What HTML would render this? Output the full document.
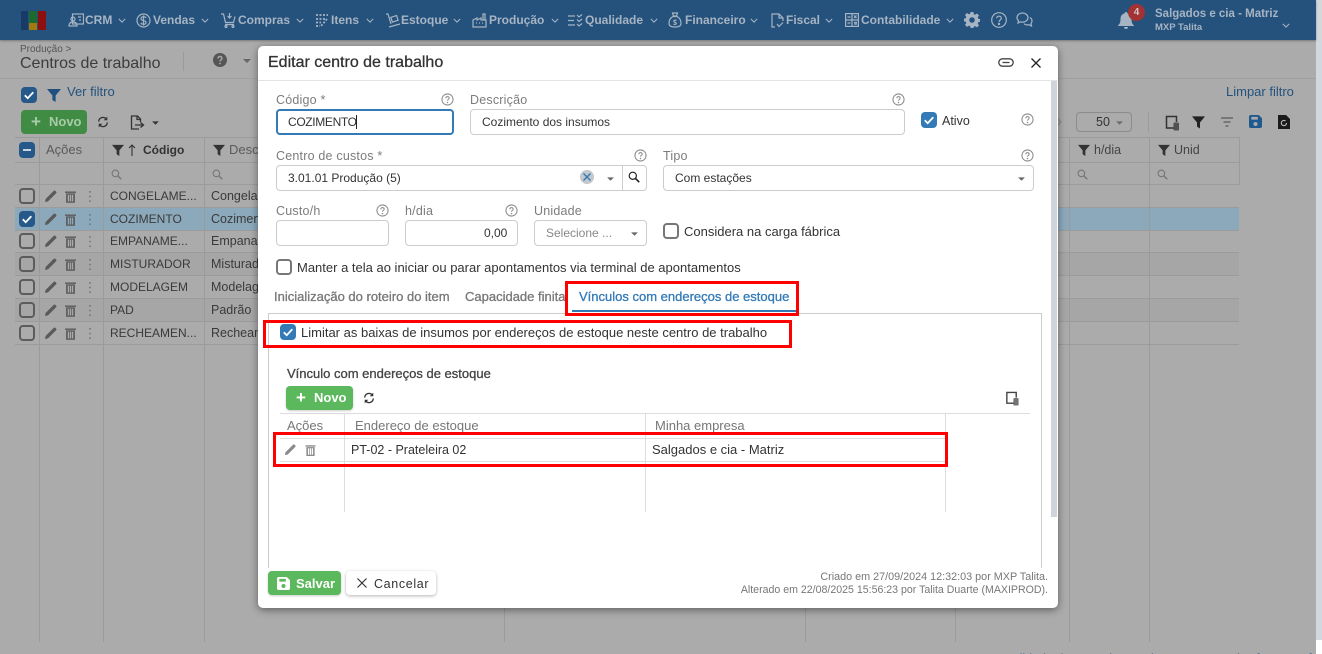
<!DOCTYPE html>
<html lang="pt-BR">
<head>
<meta charset="utf-8">
<title>Editar centro de trabalho</title>
<style>
html,body{margin:0;padding:0;overflow:hidden;height:654px;width:1322px}
body{position:relative;background:#ababab;font-family:"Liberation Sans",sans-serif;font-size:12.5px;color:#333}
.a,.t,svg.i{position:absolute}
.t{white-space:nowrap;line-height:14px;transform:translateY(-7px)}
#nav{left:0;top:0;width:1316px;height:40px;background:#24527c;box-shadow:0 1px 2px rgba(0,0,0,.3)}
.n{color:#a7b4c3;font-weight:bold;font-size:12px;top:20px}
.navicon{color:#a7b4c3;fill:none;stroke:currentColor;stroke-width:1.2}
.l{background:#9b9b9b}
.lab{color:#7c7c7c;font-size:12.5px;letter-spacing:.2px}
.inp{box-sizing:border-box;border:1px solid #ccc;border-radius:4px;background:#fff}
.cb{box-sizing:border-box;width:16px;height:16px;border:2px solid #666;border-radius:4px;background:transparent}
.cb.w{background:#fff;border-color:#777}
.cb.on{background:#337ab7;border:0}
.cb.d{border-color:#5c5c5c}
.cb.don{background:#26598a;border:0}
.ml{background:#ddd}
.redb{box-sizing:border-box;border:3px solid #f00}
.bt{color:#3a3a3a;font-size:12.5px}
.bc{color:#3a3a3a;font-size:12px}
.sb{-webkit-text-stroke:.3px currentColor}
</style>
</head>
<body>
<svg width="0" height="0" style="position:absolute">
<defs>
<symbol id="q" viewBox="0 0 14 14"><circle cx="7" cy="7" r="6" fill="none" stroke="#8a8a8a" stroke-width="1.1"/><path d="M5.2 5.6c0-1 .8-1.7 1.8-1.7s1.8.7 1.8 1.6c0 1.4-1.8 1.4-1.8 2.8" fill="none" stroke="#8a8a8a" stroke-width="1.1"/><circle cx="7" cy="10.3" r=".8" fill="#8a8a8a"/></symbol>
<symbol id="ck" viewBox="0 0 16 16"><path d="M3.8 8.3l2.9 2.9 5.6-6" fill="none" stroke="#fff" stroke-width="1.8"/></symbol>
<symbol id="pen" viewBox="0 0 14 14"><path d="M1 13l.6-3L9.7 1.9c.5-.5 1.2-.5 1.7 0l.7.7c.5.5.5 1.2 0 1.7L4 12.4z" fill="currentColor"/></symbol>
<symbol id="tr" viewBox="0 0 12 14"><path d="M0 1.5h12V3H0zM1.2 3.6h9.6V14H1.2zM3 5v7.500h1.500V5zM5.300 5v7.500h1.400V5zM7.500 5v7.500H9V5z" fill="currentColor" fill-rule="evenodd"/></symbol>
<symbol id="dots" viewBox="0 0 4 14"><circle cx="2" cy="2" r="1" fill="currentColor"/><circle cx="2" cy="7" r="1" fill="currentColor"/><circle cx="2" cy="12" r="1" fill="currentColor"/></symbol>
<symbol id="fl" viewBox="0 0 14 14"><path d="M0 1h14L8.600 7.500V14l-3.200-2V7.500z" fill="currentColor"/></symbol>
<symbol id="mg" viewBox="0 0 12 12"><circle cx="4.800" cy="4.800" r="3.600" fill="none" stroke="currentColor" stroke-width="1.200"/><path d="M7.500 7.500l3.700 3.700" stroke="currentColor" stroke-width="1.600"/></symbol>
<symbol id="rf" viewBox="0 0 14 14"><path d="M2 6.500A5 5 0 0 1 10.800 3.400M12 7.500A5 5 0 0 1 3.200 10.600" fill="none" stroke="currentColor" stroke-width="1.500"/><path d="M12 .8v4.200H7.800zM2 13.200V9h4.200z" fill="currentColor"/></symbol>
<symbol id="col" viewBox="0 0 14 16"><path d="M9 13H1.500V1.500h10V7" fill="none" stroke="currentColor" stroke-width="1.500"/><rect x="8.500" y="7.500" width="5.500" height="8" rx="1" fill="currentColor" opacity=".75"/></symbol>
<symbol id="car" viewBox="0 0 8 4"><path d="M0 0h8L4 4z" fill="currentColor"/></symbol>
<symbol id="chev" viewBox="0 0 10 6"><path d="M1 1l4 4 4-4" fill="none" stroke="currentColor" stroke-width="1.300"/></symbol>
<symbol id="sv" viewBox="0 0 14 14"><path d="M0 2a2 2 0 0 1 2-2h8.500L14 3.500V12a2 2 0 0 1-2 2H2a2 2 0 0 1-2-2zM2.500 2v3h7V2zM7 7.500a2.200 2.200 0 1 0 0 4.400 2.200 2.200 0 0 0 0-4.400z" fill="currentColor" fill-rule="evenodd"/></symbol>
</defs>
</svg>

<!-- PAGE BACKGROUND -->
<div class="a" style="left:1316px;top:0;width:6px;height:640px;background:#d2d8dc"></div>
<div class="a" style="left:1316px;top:640px;width:6px;height:14px;background:#fff"></div>

<!-- NAV -->
<div class="a" id="nav"></div>
<div class="a" style="left:21px;top:11px;width:7px;height:19px;background:#173a66"></div>
<div class="a" style="left:29px;top:11px;width:8px;height:12px;background:#1c6b2e"></div>
<div class="a" style="left:29px;top:23px;width:8px;height:7px;background:#a2780f"></div>
<div class="a" style="left:38px;top:11px;width:8px;height:19px;background:#8e0f10"></div>

<svg class="i navicon" style="left:68px;top:13px" width="16" height="14" viewBox="0 0 16 14"><rect x="4.500" y="1" width="11" height="10"/><circle cx="5" cy="6" r="2"/><path d="M1 13c0-3 2-4 4-4s4 1 4 4zM10 4h3M11 7h2"/></svg>
<div class="t n" style="left:85px">CRM</div>
<svg class="i" style="left:118px;top:18px;color:#a7b4c3" width="8" height="5"><use href="#chev"/></svg>
<svg class="i navicon" style="left:136px;top:13px" width="15" height="15" viewBox="0 0 15 15"><circle cx="7.500" cy="7.500" r="6.500"/><path d="M10 5c-.5-1-1.500-1.300-2.500-1.300S5 4.300 5 5.600c0 2.700 5 1.200 5 4 0 1.200-1.200 1.700-2.500 1.700S5.300 10.800 5 9.800M7.500 2.500v10"/></svg>
<div class="t n" style="left:153px">Vendas</div>
<svg class="i" style="left:201px;top:18px;color:#a7b4c3" width="8" height="5"><use href="#chev"/></svg>
<svg class="i navicon" style="left:221px;top:12px" width="15" height="16" viewBox="0 0 15 16"><path d="M0 2h2.500l2 8.500h8l1.500-6M4 12.500h9M8.500 1v5M6.500 4l2 2 2-2"/><circle cx="5" cy="14.500" r="1"/><circle cx="12" cy="14.500" r="1"/></svg>
<div class="t n" style="left:238px">Compras</div>
<svg class="i" style="left:296px;top:18px;color:#a7b4c3" width="8" height="5"><use href="#chev"/></svg>
<svg class="i navicon" style="left:315px;top:13px;stroke-dasharray:2 1.500;stroke-width:1.700" width="14" height="14" viewBox="0 0 14 14"><path d="M1 2h12M1 6h10M1 9.500h5M1 13h4M12 6l-6 7"/></svg>
<div class="t n" style="left:331px">Itens</div>
<svg class="i" style="left:366px;top:18px;color:#a7b4c3" width="8" height="5"><use href="#chev"/></svg>
<svg class="i navicon" style="left:385px;top:13px" width="15" height="15" viewBox="0 0 15 15"><path d="M1 1h2l3 10M4 14l11-3"/><rect x="6.500" y="3.500" width="6" height="5" transform="rotate(-18 9 6)"/></svg>
<div class="t n" style="left:401px">Estoque</div>
<svg class="i" style="left:453px;top:18px;color:#a7b4c3" width="8" height="5"><use href="#chev"/></svg>
<svg class="i navicon" style="left:472px;top:13px" width="15" height="15" viewBox="0 0 15 15"><path d="M1 14V7l4-2v2l4-2v2h5v7zM11 7V1h2v6M4 10h1M7 10h1M10 10h1"/></svg>
<div class="t n" style="left:489px">Produção</div>
<svg class="i" style="left:551px;top:18px;color:#a7b4c3" width="8" height="5"><use href="#chev"/></svg>
<svg class="i navicon" style="left:568px;top:14px" width="15" height="13" viewBox="0 0 15 13"><path d="M0 2h7M0 6.500h6M0 11h7M9 1l2 2 3-2.500M9 5.500l2 2 3-2.500M9 10l2 2 3-2.500"/></svg>
<div class="t n" style="left:585px">Qualidade</div>
<svg class="i" style="left:650px;top:18px;color:#a7b4c3" width="8" height="5"><use href="#chev"/></svg>
<svg class="i navicon" style="left:668px;top:12px" width="14" height="16" viewBox="0 0 14 16"><path d="M4.500 1h5L8.500 4h-3zM5 4.500C2 6 1 9 1 11.500 1 14 3 15 7 15s6-1 6-3.500C13 9 12 6 9 4.500zM8.500 8.500C8 8 6 7.800 5.800 9.200c0 1.300 2.500.9 2.500 2.200 0 1.200-2 1.200-2.700.6"/></svg>
<div class="t n" style="left:685px">Financeiro</div>
<svg class="i" style="left:750px;top:18px;color:#a7b4c3" width="8" height="5"><use href="#chev"/></svg>
<svg class="i navicon" style="left:771px;top:13px" width="13" height="15" viewBox="0 0 13 15"><path d="M4 14H1V1h7l4 4v3M8 1v4h4M6 11l2 2.500 4-4"/></svg>
<div class="t n" style="left:786px">Fiscal</div>
<svg class="i" style="left:825px;top:18px;color:#a7b4c3" width="8" height="5"><use href="#chev"/></svg>
<svg class="i navicon" style="left:845px;top:13px" width="14" height="14" viewBox="0 0 14 14"><rect x=".6" y=".6" width="12.800" height="12.800"/><path d="M.6 7h12.800M7 .6v12.800M2.500 4h3M9 2.500l2.500 2.500M11.500 2.500L9 5M2.500 10h3M9 9.500h3M9 11h3"/></svg>
<div class="t n" style="left:861px">Contabilidade</div>
<svg class="i" style="left:946px;top:18px;color:#a7b4c3" width="8" height="5"><use href="#chev"/></svg>
<svg class="i" style="left:964px;top:12px" width="16" height="16" viewBox="0 0 16 16"><path fill="#a7b4c3" fill-rule="evenodd" d="M6.600 0h2.800l.4 2.200 1.300.6L13 1.500l2 2-1.300 1.900.5 1.300L16 7v2.800l-1.800.4-.5 1.300 1.300 1.900-2 2-1.900-1.300-1.300.6L9.400 16H6.600l-.4-1.800-1.300-.6L3 14.900l-2-2 1.300-1.900-.5-1.300L0 9.400V6.600l1.800-.4.5-1.300L1 3l2-2 1.900 1.300 1.300-.6zM8 5.200a2.800 2.800 0 1 0 0 5.600 2.800 2.800 0 0 0 0-5.600z"/></svg>
<svg class="i navicon" style="left:991px;top:12px" width="16" height="16" viewBox="0 0 16 16"><circle cx="8" cy="8" r="7.300"/><path d="M5.700 6.300C5.700 5 6.700 4.200 8 4.200S10.300 5 10.300 6.200C10.300 8 8 8 8 10"/><circle cx="8" cy="12" r=".6"/></svg>
<svg class="i navicon" style="left:1016px;top:12px" width="17" height="16" viewBox="0 0 17 16"><path d="M6.500 1C3.500 1 1 3 1 5.500c0 1.300.6 2.400 1.500 3.200L2 11l2.500-1.200c.6.200 1.300.3 2 .3 3 0 5.500-2 5.500-4.500S9.500 1 6.500 1zM14 5.500c1.200.8 2 2 2 3.500 0 1-.4 1.900-1 2.600l.5 2.400-2.500-1.300c-1.800.5-3.800.1-5-1"/></svg>

<svg class="i" style="left:1118px;top:12px" width="16" height="18" viewBox="0 0 16 18"><path fill="#a7b4c3" d="M8 0c.9 0 1.400.6 1.400 1.400C12 2 13.500 4 13.500 7c0 4 1 5 2.500 6.500V14H0v-.5C1.500 12 2.500 11 2.500 7c0-3 1.500-5 4.100-5.600C6.600.6 7.100 0 8 0zM6 15h4a2 2 0 0 1-4 0z"/></svg>
<div class="a" style="left:1128px;top:4px;width:17px;height:17px;border-radius:50%;background:#a23234"></div>
<div class="t" style="left:1128px;top:13px;width:17px;text-align:center;color:#d3c6c8;font-size:10px;font-weight:bold">4</div>
<div class="t n" style="left:1155px;top:14px;font-size:11.5px">Salgados e cia - Matriz</div>
<div class="t n" style="left:1155px;top:28px;font-size:9.5px">MXP Talita</div>
<svg class="i" style="left:1282px;top:23px;color:#a7b4c3" width="8" height="5"><use href="#chev"/></svg>

<!-- PAGE HEADER -->
<div class="t" style="left:20px;top:50px;font-size:10px;color:#565656">Produção &gt;</div>
<div class="t" style="left:20px;top:64px;font-size:16px;color:#3d3d3d">Centros de trabalho</div>
<div class="a l" style="left:183px;top:52px;width:1px;height:19px"></div>
<svg class="i" style="left:213px;top:53px" width="14" height="14" viewBox="0 0 14 14"><circle cx="7" cy="7" r="7" fill="#565656"/><path d="M5 5.500C5 4.300 5.900 3.500 7 3.500s2 .8 2 1.900c0 1.600-2 1.500-2 3" fill="none" stroke="#ababab" stroke-width="1.400"/><circle cx="7" cy="10.500" r=".9" fill="#ababab"/></svg>
<svg class="i" style="left:243px;top:59px;color:#666" width="8" height="4"><use href="#car"/></svg>
<div class="a l" style="left:0;top:78px;width:258px;height:1px;opacity:.7"></div>
<div class="a l" style="left:1058px;top:78px;width:258px;height:1px;opacity:.7"></div>

<div class="a cb don" style="left:21px;top:87px"><svg width="16" height="16"><use href="#ck"/></svg></div>
<svg class="i" style="left:47px;top:88px;color:#1f5080" width="14" height="14"><use href="#fl"/></svg>
<div class="t" style="left:67px;top:92px;color:#25527d;font-size:13px">Ver filtro</div>
<div class="t" style="left:1226px;top:92px;color:#25527d;font-size:13px">Limpar filtro</div>

<div class="a" style="left:21px;top:110px;width:66px;height:24px;background:#418c44;border-radius:4px"></div>
<div class="t" style="left:31px;top:122px;color:#a9cba9;font-size:17px;font-weight:bold">+</div>
<div class="t" style="left:49px;top:122px;color:#a9cba9;font-size:13px;font-weight:bold">Novo</div>
<svg class="i" style="left:97px;top:116px;color:#333" width="12" height="12" viewBox="0 0 14 14"><use href="#rf"/></svg>
<svg class="i" style="left:130px;top:115px" width="15" height="15" viewBox="0 0 15 15"><path d="M9 14H1.500V1h6l3 3v3M7 1v3.500h3.500M5 10h8M10.500 7.500L13.500 10l-3 2.500" fill="none" stroke="#333" stroke-width="1.300"/></svg>
<svg class="i" style="left:152px;top:121px;color:#333" width="7" height="4" viewBox="0 0 8 4"><use href="#car"/></svg>

<svg class="i" style="left:1056px;top:117px;color:#8f8f8f" width="6" height="10" viewBox="0 0 6 10"><path d="M1 1l4 4-4 4" fill="none" stroke="currentColor" stroke-width="1.500"/></svg>
<div class="a" style="left:1076px;top:112px;width:56px;height:20px;box-sizing:border-box;border:1px solid #8c8c8c;border-radius:4px"></div>
<div class="t" style="left:1096px;top:122px;color:#333">50</div>
<svg class="i" style="left:1116px;top:121px;color:#6a6a6a" width="7" height="4" viewBox="0 0 8 4"><use href="#car"/></svg>
<div class="a l" style="left:1148px;top:112px;width:1px;height:20px"></div>
<svg class="i" style="left:1165px;top:115px;color:#333" width="14" height="16"><use href="#col"/></svg>
<svg class="i" style="left:1192px;top:115px;color:#222" width="13" height="14" viewBox="0 0 14 14"><use href="#fl"/></svg>
<svg class="i" style="left:1221px;top:117px" width="12" height="10" viewBox="0 0 12 10"><path d="M0 1h12M2.500 5h7M4.500 9h3" stroke="#5a5a5a" stroke-width="1.200"/></svg>
<svg class="i" style="left:1249px;top:115px;color:#1f5a8e" width="13" height="13" viewBox="0 0 14 14"><use href="#sv"/></svg>
<svg class="i" style="left:1278px;top:115px" width="12" height="14" viewBox="0 0 12 14"><path d="M0 0h8l4 4v10H0z" fill="#1b1b1b"/><path d="M8.500 8a2.600 2.600 0 1 1-1-2" fill="none" stroke="#bbb" stroke-width="1.100"/></svg>

<!-- BACKGROUND TABLE -->
<div class="a l" style="left:15px;top:137px;width:1224px;height:1px"></div>
<div class="a l" style="left:15px;top:162px;width:1224px;height:1px"></div>
<div class="a l" style="left:15px;top:184px;width:1224px;height:1px"></div>
<div class="a" style="left:15px;top:207px;width:1224px;height:23px;background:#8ca9bc"></div>
<div class="a" style="left:15px;top:253px;width:1224px;height:22px;background:#a6a6a6"></div>
<div class="a" style="left:15px;top:298px;width:1224px;height:23px;background:#a6a6a6"></div>
<div class="a l" style="left:15px;top:207px;width:1224px;height:1px"></div>
<div class="a l" style="left:15px;top:230px;width:1224px;height:1px"></div>
<div class="a l" style="left:15px;top:252px;width:1224px;height:1px"></div>
<div class="a l" style="left:15px;top:275px;width:1224px;height:1px"></div>
<div class="a l" style="left:15px;top:298px;width:1224px;height:1px"></div>
<div class="a l" style="left:15px;top:321px;width:1224px;height:1px"></div>
<div class="a l" style="left:15px;top:344px;width:1224px;height:1px"></div>
<div class="a l" style="left:39px;top:137px;width:1px;height:505px"></div>
<div class="a l" style="left:103px;top:137px;width:1px;height:505px"></div>
<div class="a l" style="left:204px;top:137px;width:1px;height:505px"></div>
<div class="a l" style="left:504px;top:137px;width:1px;height:505px"></div>
<div class="a l" style="left:805px;top:137px;width:1px;height:505px"></div>
<div class="a l" style="left:955px;top:137px;width:1px;height:505px"></div>
<div class="a l" style="left:1069px;top:137px;width:1px;height:505px"></div>
<div class="a l" style="left:1149px;top:137px;width:1px;height:505px"></div>
<div class="a l" style="left:1239px;top:137px;width:1px;height:48px"></div>

<div class="a" style="left:19px;top:142px;width:16px;height:16px;background:#26598a;border-radius:4px"></div>
<div class="a" style="left:23px;top:149px;width:8px;height:2px;background:#c8d4de"></div>
<div class="t bt" style="left:46px;top:150px;color:#5a5a5a;font-size:13px">Ações</div>
<svg class="i" style="left:112px;top:144px;color:#333" width="12" height="12" viewBox="0 0 14 14"><use href="#fl"/></svg>
<svg class="i" style="left:128px;top:144px" width="8" height="12" viewBox="0 0 8 12"><path d="M4 12V1M1 4l3-3 3 3" fill="none" stroke="#333" stroke-width="1.100"/></svg>
<div class="t bt" style="left:143px;top:150px;font-weight:bold;color:#333;font-size:12px">Código</div>
<svg class="i" style="left:213px;top:144px;color:#333" width="12" height="12" viewBox="0 0 14 14"><use href="#fl"/></svg>
<div class="t bt" style="left:229px;top:150px;color:#5c5c5c;font-size:13px">Desc</div>
<svg class="i" style="left:1078px;top:144px;color:#333" width="12" height="12" viewBox="0 0 14 14"><use href="#fl"/></svg>
<div class="t bt" style="left:1094px;top:150px;color:#444">h/dia</div>
<svg class="i" style="left:1158px;top:144px;color:#333" width="12" height="12" viewBox="0 0 14 14"><use href="#fl"/></svg>
<div class="t bt" style="left:1174px;top:150px;color:#444">Unid</div>
<svg class="i" style="left:111px;top:169px;color:#777" width="11" height="11" viewBox="0 0 12 12"><use href="#mg"/></svg>
<svg class="i" style="left:212px;top:169px;color:#777" width="11" height="11" viewBox="0 0 12 12"><use href="#mg"/></svg>
<svg class="i" style="left:1077px;top:169px;color:#777" width="11" height="11" viewBox="0 0 12 12"><use href="#mg"/></svg>
<svg class="i" style="left:1157px;top:169px;color:#777" width="11" height="11" viewBox="0 0 12 12"><use href="#mg"/></svg>

<!-- rows -->
<div class="a cb d" style="left:19px;top:188px"></div>
<div class="a cb don" style="left:19px;top:211px"><svg width="16" height="16"><use href="#ck"/></svg></div>
<div class="a cb d" style="left:19px;top:233px"></div>
<div class="a cb d" style="left:19px;top:256px"></div>
<div class="a cb d" style="left:19px;top:279px"></div>
<div class="a cb d" style="left:19px;top:302px"></div>
<div class="a cb d" style="left:19px;top:325px"></div>

<svg class="i" style="left:44px;top:189px;color:#5a5a5a" width="14" height="14"><use href="#pen"/></svg>
<svg class="i" style="left:44px;top:212px;color:#5a5a5a" width="14" height="14"><use href="#pen"/></svg>
<svg class="i" style="left:44px;top:234px;color:#5a5a5a" width="14" height="14"><use href="#pen"/></svg>
<svg class="i" style="left:44px;top:257px;color:#5a5a5a" width="14" height="14"><use href="#pen"/></svg>
<svg class="i" style="left:44px;top:280px;color:#5a5a5a" width="14" height="14"><use href="#pen"/></svg>
<svg class="i" style="left:44px;top:303px;color:#5a5a5a" width="14" height="14"><use href="#pen"/></svg>
<svg class="i" style="left:44px;top:326px;color:#5a5a5a" width="14" height="14"><use href="#pen"/></svg>

<svg class="i" style="left:65px;top:190px;color:#5a5a5a" width="11" height="13" viewBox="0 0 12 14"><use href="#tr"/></svg>
<svg class="i" style="left:65px;top:213px;color:#5a5a5a" width="11" height="13" viewBox="0 0 12 14"><use href="#tr"/></svg>
<svg class="i" style="left:65px;top:235px;color:#5a5a5a" width="11" height="13" viewBox="0 0 12 14"><use href="#tr"/></svg>
<svg class="i" style="left:65px;top:258px;color:#5a5a5a" width="11" height="13" viewBox="0 0 12 14"><use href="#tr"/></svg>
<svg class="i" style="left:65px;top:281px;color:#5a5a5a" width="11" height="13" viewBox="0 0 12 14"><use href="#tr"/></svg>
<svg class="i" style="left:65px;top:304px;color:#5a5a5a" width="11" height="13" viewBox="0 0 12 14"><use href="#tr"/></svg>
<svg class="i" style="left:65px;top:327px;color:#5a5a5a" width="11" height="13" viewBox="0 0 12 14"><use href="#tr"/></svg>

<svg class="i" style="left:88px;top:190px;color:#777" width="4" height="13" viewBox="0 0 4 14"><use href="#dots"/></svg>
<svg class="i" style="left:88px;top:213px;color:#777" width="4" height="13" viewBox="0 0 4 14"><use href="#dots"/></svg>
<svg class="i" style="left:88px;top:235px;color:#777" width="4" height="13" viewBox="0 0 4 14"><use href="#dots"/></svg>
<svg class="i" style="left:88px;top:258px;color:#777" width="4" height="13" viewBox="0 0 4 14"><use href="#dots"/></svg>
<svg class="i" style="left:88px;top:281px;color:#777" width="4" height="13" viewBox="0 0 4 14"><use href="#dots"/></svg>
<svg class="i" style="left:88px;top:304px;color:#777" width="4" height="13" viewBox="0 0 4 14"><use href="#dots"/></svg>
<svg class="i" style="left:88px;top:327px;color:#777" width="4" height="13" viewBox="0 0 4 14"><use href="#dots"/></svg>

<div class="t bc" style="left:110px;top:196px">CONGELAME...</div>
<div class="t bc" style="left:110px;top:219px">COZIMENTO</div>
<div class="t bc" style="left:110px;top:241px">EMPANAME...</div>
<div class="t bc" style="left:110px;top:264px">MISTURADOR</div>
<div class="t bc" style="left:110px;top:287px">MODELAGEM</div>
<div class="t bc" style="left:110px;top:310px">PAD</div>
<div class="t bc" style="left:110px;top:333px">RECHEAMEN...</div>

<div class="t bt" style="left:211px;top:196px">Congelamento</div>
<div class="t bt" style="left:211px;top:219px">Cozimento</div>
<div class="t bt" style="left:211px;top:241px">Empanamento</div>
<div class="t bt" style="left:211px;top:264px">Misturador</div>
<div class="t bt" style="left:211px;top:287px">Modelagem</div>
<div class="t bt" style="left:211px;top:310px">Padrão</div>
<div class="t bt" style="left:211px;top:333px">Recheamento</div>

<div class="t" style="left:1005px;top:659px;color:#25527d;font-size:12.500px">Exibindo de 1 a 7 de 7 registros encontrados [ mostrar ]</div>

<!-- MODAL -->
<div class="a" style="left:258px;top:46px;width:800px;height:562px;background:#fff;border-radius:5px;box-shadow:0 2px 8px rgba(0,0,0,.45)"></div>
<div class="t sb" style="left:268px;top:63px;font-size:16px;color:#333">Editar centro de trabalho</div>
<svg class="i" style="left:998px;top:58px" width="16" height="9" viewBox="0 0 16 9"><rect x=".8" y=".8" width="14.400" height="7.400" rx="3.700" fill="none" stroke="#444" stroke-width="1.300"/><path d="M4.500 4.500h7" stroke="#444" stroke-width="1.300"/></svg>
<svg class="i" style="left:1031px;top:58px" width="10" height="10"><path d="M.5.500l9 9M9.500.500l-9 9" stroke="#222" stroke-width="1.300"/></svg>
<div class="a" style="left:258px;top:80px;width:800px;height:1px;background:#e3e3e3"></div>
<div class="a" style="left:1051px;top:81px;width:6px;height:436px;background:#ced4da"></div>

<div class="t lab" style="left:276px;top:100px">Código *</div>
<svg class="i" style="left:441px;top:93px" width="13" height="13"><use href="#q"/></svg>
<div class="a inp" style="left:276px;top:109px;width:178px;height:26px;border:2px solid #337ab7"></div>
<div class="t" style="left:288px;top:122px;font-size:12px;letter-spacing:-.35px">COZIMENTO</div>
<div class="a" style="left:356px;top:115px;width:1px;height:14px;background:#222"></div>

<div class="t lab" style="left:470px;top:100px">Descrição</div>
<svg class="i" style="left:892px;top:93px" width="13" height="13"><use href="#q"/></svg>
<div class="a inp" style="left:470px;top:109px;width:435px;height:26px"></div>
<div class="t" style="left:482px;top:122px;font-size:12px">Cozimento dos insumos</div>

<div class="a cb on" style="left:921px;top:112px"><svg width="16" height="16"><use href="#ck"/></svg></div>
<div class="t" style="left:942px;top:121px;font-size:12.500px">Ativo</div>
<svg class="i" style="left:1021px;top:113px" width="13" height="13"><use href="#q"/></svg>

<div class="t lab" style="left:276px;top:156px">Centro de custos *</div>
<svg class="i" style="left:634px;top:149px" width="13" height="13"><use href="#q"/></svg>
<div class="a inp" style="left:276px;top:165px;width:371px;height:26px"></div>
<div class="t" style="left:288px;top:178px;font-size:12px">3.01.01 Produção (5)</div>
<div class="a" style="left:580px;top:170px;width:14px;height:14px;border-radius:50%;background:#c3c8ce"></div>
<svg class="i" style="left:583px;top:173px" width="8" height="8"><path d="M.5.500l7 7M7.500.500l-7 7" stroke="#337ab7" stroke-width="1.400"/></svg>
<svg class="i" style="left:607px;top:177px;color:#666" width="7" height="4" viewBox="0 0 8 4"><use href="#car"/></svg>
<div class="a" style="left:622px;top:165px;width:1px;height:26px;background:#ccc"></div>
<svg class="i" style="left:628px;top:171px;color:#222" width="12" height="12"><use href="#mg"/></svg>

<div class="t lab" style="left:663px;top:156px">Tipo</div>
<svg class="i" style="left:1021px;top:149px" width="13" height="13"><use href="#q"/></svg>
<div class="a inp" style="left:663px;top:165px;width:371px;height:26px"></div>
<div class="t" style="left:675px;top:178px;font-size:12px">Com estações</div>
<svg class="i" style="left:1018px;top:177px;color:#666" width="7" height="4" viewBox="0 0 8 4"><use href="#car"/></svg>

<div class="t lab" style="left:276px;top:211px">Custo/h</div>
<svg class="i" style="left:376px;top:204px" width="13" height="13"><use href="#q"/></svg>
<div class="a inp" style="left:276px;top:220px;width:113px;height:26px"></div>
<div class="t lab" style="left:405px;top:211px">h/dia</div>
<svg class="i" style="left:505px;top:204px" width="13" height="13"><use href="#q"/></svg>
<div class="a inp" style="left:405px;top:220px;width:113px;height:26px"></div>
<div class="t" style="left:484px;top:233px;font-size:12px">0,00</div>
<div class="t lab" style="left:534px;top:211px">Unidade</div>
<div class="a inp" style="left:534px;top:220px;width:113px;height:26px"></div>
<div class="t" style="left:546px;top:233px;font-size:12px;color:#888">Selecione ...</div>
<svg class="i" style="left:631px;top:232px;color:#666" width="7" height="4" viewBox="0 0 8 4"><use href="#car"/></svg>

<div class="a cb w" style="left:663px;top:223px"></div>
<div class="t" style="left:684px;top:232px;font-size:13px">Considera na carga fábrica</div>
<div class="a cb w" style="left:276px;top:259px"></div>
<div class="t" style="left:297px;top:268px;font-size:13px">Manter a tela ao iniciar ou parar apontamentos via terminal de apontamentos</div>

<div class="t sb" style="left:274px;top:297px;font-size:13px;color:#777">Inicialização do roteiro do item</div>
<div class="t sb" style="left:465px;top:297px;font-size:13px;color:#777">Capacidade finita</div>
<div class="t sb" style="left:579px;top:297px;font-size:13px;color:#337ab7">Vínculos com endereços de estoque</div>
<div class="a" style="left:572px;top:310px;width:224px;height:2px;background:#337ab7"></div>

<div class="a" style="left:268px;top:313px;width:773px;height:1px;background:#ccc"></div>
<div class="a" style="left:268px;top:313px;width:1px;height:255px;background:#ccc"></div>
<div class="a" style="left:1041px;top:313px;width:1px;height:255px;background:#ccc"></div>

<div class="a cb on" style="left:280px;top:324px"><svg width="16" height="16"><use href="#ck"/></svg></div>
<div class="t" style="left:301px;top:333px;font-size:13px">Limitar as baixas de insumos por endereços de estoque neste centro de trabalho</div>

<div class="t sb" style="left:287px;top:374px;font-size:13px;color:#444">Vínculo com endereços de estoque</div>

<div class="a" style="left:286px;top:386px;width:67px;height:24px;background:#5cb85c;border-radius:4px;box-shadow:0 1px 2px rgba(0,0,0,.2)"></div>
<div class="t" style="left:296px;top:398px;color:#fff;font-size:17px;font-weight:bold">+</div>
<div class="t" style="left:314px;top:398px;color:#fff;font-size:13px;font-weight:bold">Novo</div>
<svg class="i" style="left:363px;top:392px;color:#333" width="12" height="12" viewBox="0 0 14 14"><use href="#rf"/></svg>
<svg class="i" style="left:1005px;top:391px;color:#444" width="14" height="15"><use href="#col"/></svg>

<div class="a ml" style="left:280px;top:413px;width:750px;height:1px"></div>
<div class="a ml" style="left:280px;top:438px;width:665px;height:1px"></div>
<div class="a ml" style="left:280px;top:461px;width:665px;height:1px"></div>
<div class="a ml" style="left:344px;top:413px;width:1px;height:99px"></div>
<div class="a ml" style="left:645px;top:413px;width:1px;height:99px"></div>
<div class="a ml" style="left:945px;top:413px;width:1px;height:99px"></div>
<div class="t" style="left:287px;top:426px;color:#777;font-size:13px">Ações</div>
<div class="t" style="left:355px;top:426px;color:#777;font-size:13px">Endereço de estoque</div>
<div class="t" style="left:655px;top:426px;color:#777;font-size:13px">Minha empresa</div>
<svg class="i" style="left:284px;top:443px;color:#8a8a8a" width="13" height="13"><use href="#pen"/></svg>
<svg class="i" style="left:305px;top:444px;color:#8a8a8a" width="11" height="12" viewBox="0 0 12 14"><use href="#tr"/></svg>
<div class="t" style="left:351px;top:450px">PT-02 - Prateleira 02</div>
<div class="t" style="left:652px;top:450px;font-size:13px">Salgados e cia - Matriz</div>

<!-- red annotation boxes -->
<div class="a redb" style="left:565px;top:281px;width:234px;height:35px"></div>
<div class="a redb" style="left:263px;top:320px;width:529px;height:28px"></div>
<div class="a redb" style="left:273px;top:432px;width:675px;height:35px"></div>

<!-- footer -->
<div class="a" style="left:268px;top:571px;width:73px;height:24px;background:#5cb85c;border-radius:4px;box-shadow:0 1px 2px rgba(0,0,0,.2)"></div>
<svg class="i" style="left:277px;top:577px;color:#fff" width="13" height="13" viewBox="0 0 14 14"><use href="#sv"/></svg>
<div class="t" style="left:296px;top:584px;color:#fff;font-weight:bold;font-size:13px">Salvar</div>
<div class="a" style="left:346px;top:571px;width:90px;height:24px;background:#fff;border-radius:4px;box-shadow:0 1px 3px rgba(0,0,0,.3)"></div>
<svg class="i" style="left:357px;top:578px" width="10" height="10"><path d="M.5.500l9 9M9.500.500l-9 9" stroke="#333" stroke-width="1.200"/></svg>
<div class="t" style="left:374px;top:584px;color:#333;font-size:12.500px;letter-spacing:.65px">Cancelar</div>
<div class="t" style="right:274px;top:577px;font-size:10.800px;color:#777">Criado em 27/09/2024 12:32:03 por MXP Talita.</div>
<div class="t" style="right:274px;top:590px;font-size:10.600px;color:#777">Alterado em 22/08/2025 15:56:23 por Talita Duarte (MAXIPROD).</div>
</body>
</html>
